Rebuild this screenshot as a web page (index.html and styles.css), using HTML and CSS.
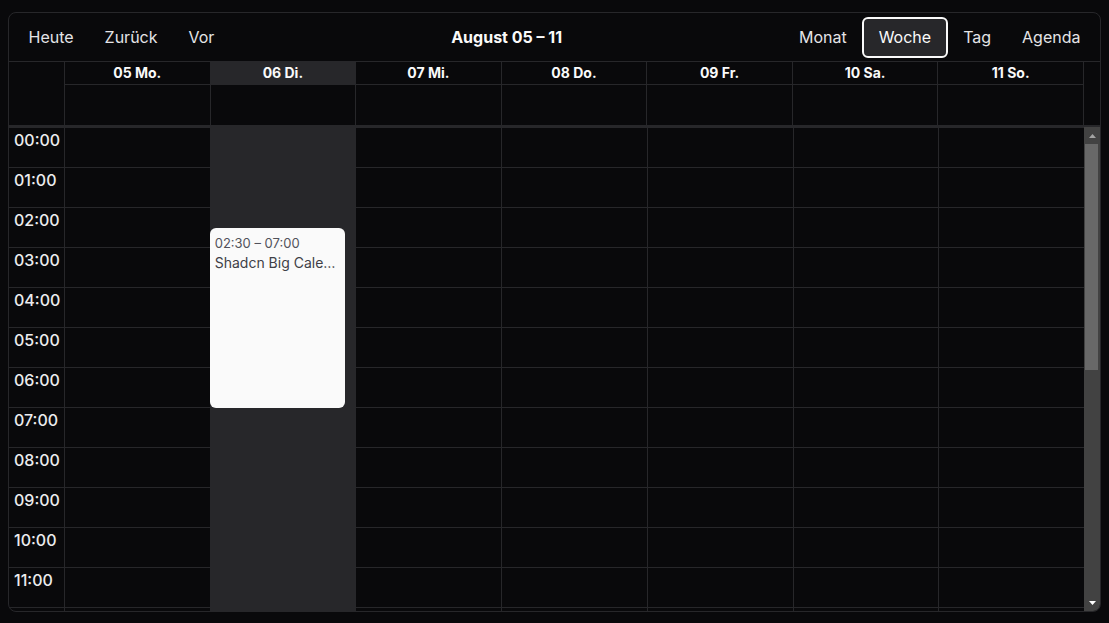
FILE: index.html
```html
<!DOCTYPE html>
<html>

<head>
  <meta charset="utf-8">
  <link rel="stylesheet" href="styles.css">
  <title>Kalender</title>
</head>

<body>
  <div class="calendar">
    <div class="toolbar">
      <div class="btn-group">
        <button type="button" class="btn">Heute</button>
        <button type="button" class="btn">Zurück</button>
        <button type="button" class="btn">Vor</button>
      </div>
      <span class="toolbar-label">August 05 – 11</span>
      <div class="btn-group">
        <button type="button" class="btn">Monat</button>
        <button type="button" class="btn active">Woche</button>
        <button type="button" class="btn">Tag</button>
        <button type="button" class="btn">Agenda</button>
      </div>
    </div>

    <div class="time-header">
      <div class="header-gutter"></div>
      <div class="header-col">
        <div class="header-label">05 Mo.</div>
        <div class="allday"></div>
      </div>
      <div class="header-col">
        <div class="header-label today">06 Di.</div>
        <div class="allday"></div>
      </div>
      <div class="header-col">
        <div class="header-label">07 Mi.</div>
        <div class="allday"></div>
      </div>
      <div class="header-col">
        <div class="header-label">08 Do.</div>
        <div class="allday"></div>
      </div>
      <div class="header-col">
        <div class="header-label">09 Fr.</div>
        <div class="allday"></div>
      </div>
      <div class="header-col">
        <div class="header-label">10 Sa.</div>
        <div class="allday"></div>
      </div>
      <div class="header-col">
        <div class="header-label">11 So.</div>
        <div class="allday"></div>
      </div>
    </div>

    <div class="time-body">
      <div class="time-content">
        <div class="time-grid">
          <div class="gutter">
            <div class="slot-label">00:00</div>
            <div class="slot-label">01:00</div>
            <div class="slot-label">02:00</div>
            <div class="slot-label">03:00</div>
            <div class="slot-label">04:00</div>
            <div class="slot-label">05:00</div>
            <div class="slot-label">06:00</div>
            <div class="slot-label">07:00</div>
            <div class="slot-label">08:00</div>
            <div class="slot-label">09:00</div>
            <div class="slot-label">10:00</div>
            <div class="slot-label">11:00</div>
            <div class="slot-label">12:00</div>
            <div class="slot-label">13:00</div>
            <div class="slot-label">14:00</div>
            <div class="slot-label">15:00</div>
            <div class="slot-label">16:00</div>
            <div class="slot-label">17:00</div>
            <div class="slot-label">18:00</div>
            <div class="slot-label">19:00</div>
            <div class="slot-label">20:00</div>
            <div class="slot-label">21:00</div>
            <div class="slot-label">22:00</div>
            <div class="slot-label">23:00</div>
          </div>
          <div class="day-col"></div>
          <div class="day-col today">
            <div class="event">
              <div class="event-time">02:30 – 07:00</div>
              <div class="event-title">Shadcn Big Calendar</div>
            </div>
          </div>
          <div class="day-col"></div>
          <div class="day-col"></div>
          <div class="day-col"></div>
          <div class="day-col"></div>
          <div class="day-col"></div>
        </div>
      </div>

      <!-- scrollbar -->
      <div class="scrollbar">
        <div class="sb-btn">
          <svg width="7" height="4" viewBox="0 0 7 4"><path d="M0 4L3.5 0L7 4z" fill="#a3a3a3"/></svg>
        </div>
        <div class="sb-track">
          <div class="sb-thumb"></div>
        </div>
        <div class="sb-btn">
          <svg width="7" height="4" viewBox="0 0 7 4"><path d="M0 0L7 0L3.5 4z" fill="#ffffff"/></svg>
        </div>
      </div>
    </div>
  </div>
</body>

</html>
```

FILE: styles.css
```css
html,
body {
  font-family: Inter, "Noto Sans", sans-serif;
  color: #fafafa;
  background-color: #09090b;
}

body {
  margin: 12px 8px;
}

.calendar {
  height: 600px;
  display: flex;
  flex-direction: column;
  border: 1px solid #27272a;
  border-radius: 8px;
  overflow: hidden;
  box-sizing: border-box;
}

/* toolbar */

.toolbar {
  display: flex;
  align-items: center;
  height: 49px;
  padding: 0 4px;
  border-bottom: 1px solid #27272a;
  box-sizing: border-box;
  flex-shrink: 0;
}

.btn-group {
  display: flex;
}

.btn {
  height: 41px;
  padding: 0 13.5px;
  font-family: inherit;
  font-size: 16px;
  color: #e4e4e7;
  background: none;
  border: 2px solid transparent;
  border-radius: 6px;
}

.btn.active {
  padding: 0 14.5px;
  background-color: #27272a;
  border-color: #fafafa;
  color: #fafafa;
}

.toolbar-label {
  flex: 1;
  text-align: center;
  font-size: 16px;
  font-weight: 700;
}

/* header */

.time-header {
  display: grid;
  grid-template-columns: 55px repeat(7, 1fr);
  margin-right: 16px;
  border-right: 1px solid #27272a;
  flex-shrink: 0;
}

.header-col {
  border-left: 1px solid #27272a;
}

.header-label {
  height: 22px;
  line-height: 22px;
  border-bottom: 1px solid #27272a;
  text-align: center;
  font-size: 14px;
  font-weight: 700;
}

.header-label.today {
  background-color: #27272a;
}

.allday {
  height: 40px;
}

/* time grid */

.time-body {
  flex: 1;
  display: flex;
  min-height: 0;
  border-top: 2px solid #27272a;
}

.time-content {
  flex: 1;
  overflow: hidden;
}

.time-grid {
  display: grid;
  grid-template-columns: 55px repeat(7, 1fr);
  background-image: repeating-linear-gradient(to bottom, #27272a 0 1px, transparent 1px 40px);
}

.slot-label {
  height: 40px;
  padding: 3px 5px 0;
  box-sizing: border-box;
  font-size: 16px;
  font-weight: 500;
  color: #ececee;
}

.day-col {
  position: relative;
  border-left: 1px solid #27272a;
}

.day-col.today {
  background-color: #27272a;
}

.event {
  position: absolute;
  top: 101px;
  left: -1px;
  right: 10px;
  height: 180px;
  padding: 7px 5px 5px;
  box-sizing: border-box;
  background-color: #fafafa;
  border-radius: 6px;
  color: #3f3f46;
}

.event-time {
  font-size: 13px;
  line-height: 16px;
  color: #52525b;
}

.event-title {
  margin-top: 3px;
  font-size: 14px;
  white-space: nowrap;
  overflow: hidden;
  text-overflow: ellipsis;
}

/* scrollbar */

.scrollbar {
  width: 16px;
  display: flex;
  flex-direction: column;
  background-color: #424242;
}

.sb-btn {
  height: 17px;
  display: flex;
  align-items: center;
  justify-content: center;
  flex-shrink: 0;
}

.sb-track {
  flex: 1;
  padding: 0 2px 0 1px;
}

.sb-thumb {
  height: 226px;
  background-color: #686868;
}
```
